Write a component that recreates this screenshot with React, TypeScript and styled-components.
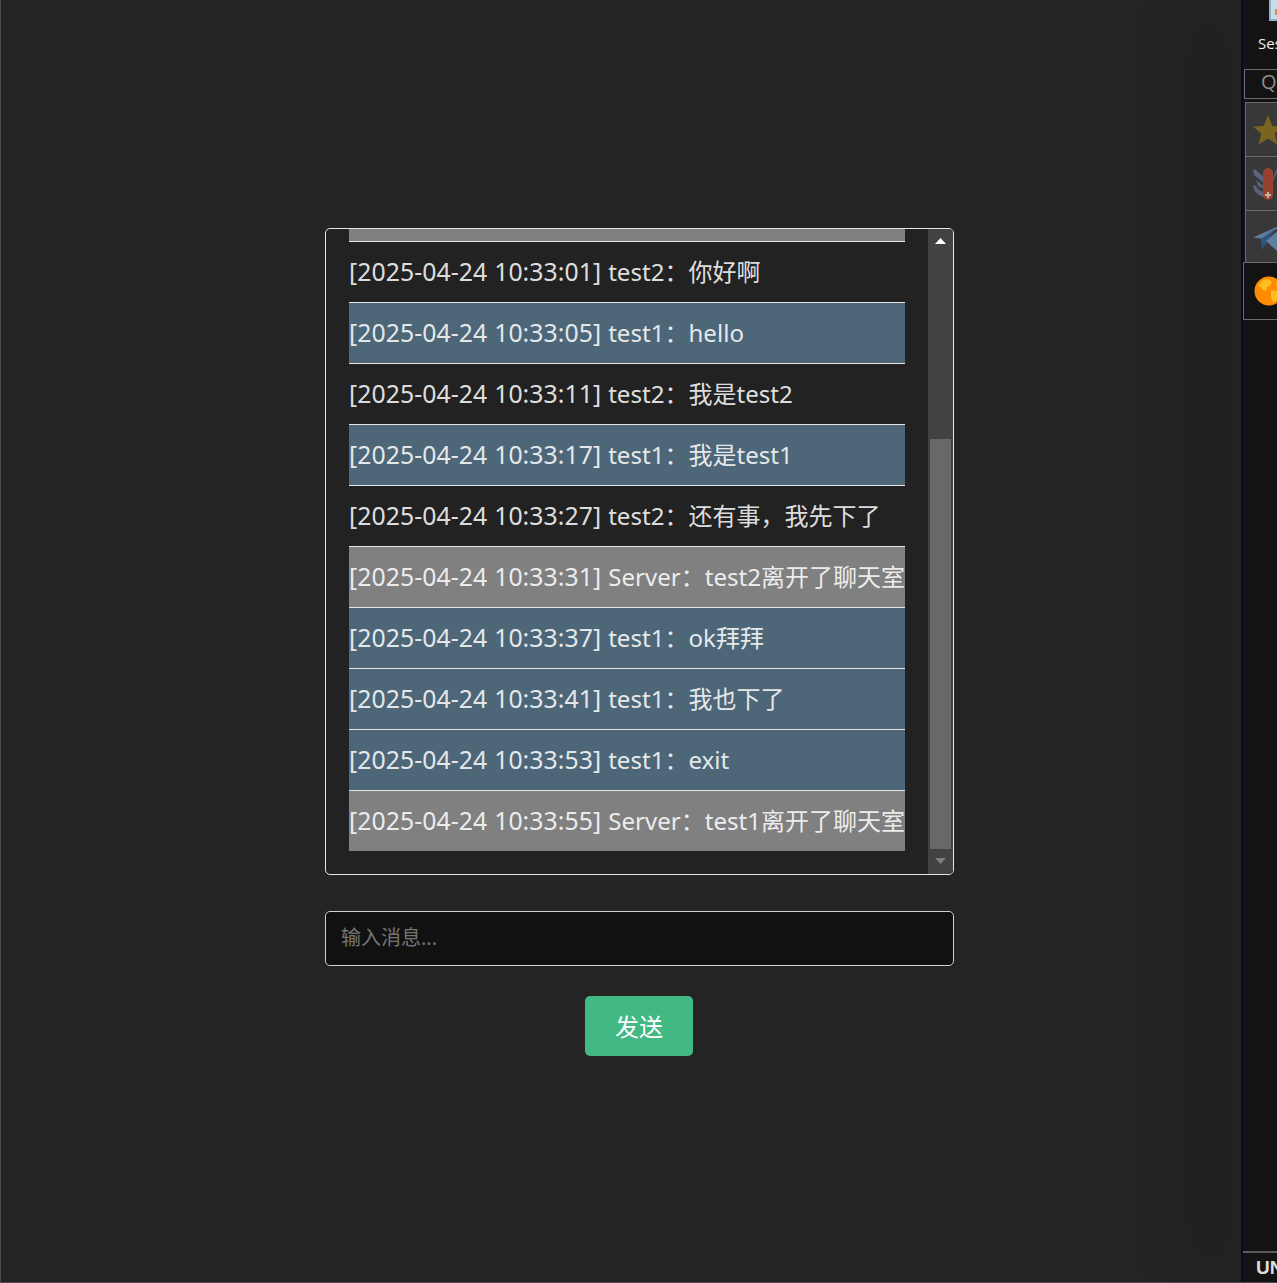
import React from "react";
import styled, { createGlobalStyle } from "styled-components";

const GlobalStyle = createGlobalStyle`
  html, body {
    margin: 0;
    padding: 0;
    height: 100%;
    background: #242424;
    overflow: hidden;
  }
  * {
    box-sizing: border-box;
  }
`;

const FONT = `"Noto Sans", "Noto Sans CJK SC", sans-serif`;

type Kind = "server" | "self" | "other";

const rowColor: Record<Kind, string> = {
  server: "#808080",
  self: "#4d6779",
  other: "transparent",
};

const Page = styled.div`
  position: relative;
  height: 1283px;
  display: flex;
  flex-direction: column;
  align-items: center;
  justify-content: center;
  padding: 2px 0 0 1px;
  background: #242424;
  border-left: 1px solid #4a4a4a;
  border-bottom: 1px solid #4a4a4a;
  font-family: ${FONT};
`;

const ChatBox = styled.div`
  width: 629px;
  height: 647px;
  flex: none;
  display: flex;
  border: 1px solid #e6e6e6;
  border-radius: 5px;
  overflow: hidden;
  background: #222;
`;

const MessageList = styled.div`
  flex: 1;
  min-width: 0;
  padding: 0 23px 23px;
`;

const Row = styled.div<{ $kind: Kind; $clipped?: boolean; $last?: boolean }>`
  height: ${({ $clipped, $last }) => ($clipped ? "13px" : $last ? "60px" : "61px")};
  line-height: 58px;
  font-size: 24px;
  white-space: nowrap;
  overflow: hidden;
  color: rgba(255, 255, 255, 0.87);
  background: ${({ $kind }) => rowColor[$kind]};
  border-bottom: ${({ $last }) => ($last ? "none" : "1px solid #e6e6e6")};
`;

const Stamp = styled.span`
  font-size: 24.8px;
  letter-spacing: 0.05px;
  word-spacing: 0.5px;
`;

const Latin = styled.span`
  font-size: 24.1px;
`;

const ScrollBar = styled.div`
  width: 25px;
  display: flex;
  flex-direction: column;
  align-items: center;
  background: #424242;
`;

const ArrowButton = styled.div<{ $enabled?: boolean }>`
  width: 100%;
  height: 25px;
  flex: none;
  display: flex;
  align-items: center;
  justify-content: center;
  padding-bottom: ${({ $enabled }) => ($enabled ? "1px" : "2px")};
  color: ${({ $enabled }) => ($enabled ? "#fff" : "#7f7f7f")};
`;

const TrackGap = styled.div`
  flex: none;
  height: 185px;
`;

const Thumb = styled.div`
  flex: 1;
  width: 21px;
  background: #686868;
`;

const MessageInput = styled.input`
  display: block;
  width: 629px;
  height: 55px;
  flex: none;
  margin-top: 36px;
  padding: 0 15px 2px;
  background: #111;
  border: 1px solid #d0d0d0;
  border-radius: 5px;
  color: #fff;
  font-family: ${FONT};
  font-size: 20px;
  outline: none;

  &::placeholder {
    color: #757575;
    opacity: 1;
  }
`;

const SendButton = styled.button`
  width: 108px;
  height: 60px;
  flex: none;
  margin: 30px 1px 0 0;
  padding: 0 0 2px;
  border: none;
  border-radius: 5px;
  background: #42b983;
  color: #fff;
  font-family: ${FONT};
  font-size: 24px;
`;

const Sidebar = styled.aside`
  position: absolute;
  top: 0;
  right: 0;
  bottom: 0;
  width: 36px;
  display: flex;
  flex-direction: column;
  overflow: hidden;
  background: #131313;
  border-left: 2px solid #050b20;
  box-shadow: -50px 0 60px rgba(0, 0, 0, 0.16);
  font-family: "Open Sans", sans-serif;
`;

const DocIcon = styled.div`
  height: 21px;
  margin-left: 26px;
  flex: none;
  position: relative;
  background: #c9dcea;
  border-left: 2px solid #8fb0c6;
  border-bottom: 2px solid #8fb0c6;

  &::after {
    content: "";
    position: absolute;
    top: 9px;
    left: 4px;
    width: 3px;
    height: 6px;
    background: #d98a55;
  }
`;

const ToolLabel = styled.div`
  height: 46px;
  padding: 11px 0 0 15px;
  flex: none;
  color: #eee;
  font-size: 15px;
  line-height: 22px;
  white-space: nowrap;
`;

const QuickBox = styled.div`
  height: 30px;
  width: 60px;
  margin: 2px 0 3px 1px;
  padding-left: 16px;
  flex: none;
  border: 1px solid #6c6c6c;
  color: #8e8e8e;
  font-size: 20px;
  line-height: 24px;
`;

const ToolCell = styled.div<{ $active?: boolean; $height: number }>`
  height: ${({ $height }) => $height}px;
  width: 70px;
  flex: none;
  margin-left: ${({ $active }) => ($active ? "0" : "2px")};
  margin-top: ${({ $active }) => ($active ? "-1px" : "0")};
  padding-left: ${({ $active }) => ($active ? "10px" : "7px")};
  display: flex;
  align-items: center;
  background: ${({ $active }) => ($active ? "#131313" : "#383838")};
  border: 1px solid #6a6a6a;
  border-bottom-width: ${({ $active }) => ($active ? "1px" : "0")};

  svg {
    flex: none;
  }
`;

const SidebarSpring = styled.div`
  flex: 1;
`;

const StatusBar = styled.div`
  height: 31px;
  flex: none;
  padding-left: 13px;
  border-top: 2px solid #5a5a5a;
  color: #dcdcdc;
  font-family: "Liberation Sans", sans-serif;
  font-size: 19px;
  font-weight: 700;
  line-height: 30px;
  white-space: nowrap;
`;

const messages: { time: string; who: string; text: string; kind: Kind }[] = [
  { time: "10:33:01", who: "test2", text: "你好啊", kind: "other" },
  { time: "10:33:05", who: "test1", text: "hello", kind: "self" },
  { time: "10:33:11", who: "test2", text: "我是test2", kind: "other" },
  { time: "10:33:17", who: "test1", text: "我是test1", kind: "self" },
  { time: "10:33:27", who: "test2", text: "还有事，我先下了", kind: "other" },
  { time: "10:33:31", who: "Server", text: "test2离开了聊天室", kind: "server" },
  { time: "10:33:37", who: "test1", text: "ok拜拜", kind: "self" },
  { time: "10:33:41", who: "test1", text: "我也下了", kind: "self" },
  { time: "10:33:53", who: "test1", text: "exit", kind: "self" },
  { time: "10:33:55", who: "Server", text: "test1离开了聊天室", kind: "server" },
];

const mixed = (text: string) =>
  text.split(/([\x20-\x7e]+)/).map((part, i) => (i % 2 ? <Latin key={i}>{part}</Latin> : part));

const Arrow = ({ down }: { down?: boolean }) => (
  <svg width="11" height="6" viewBox="0 0 11 6">
    <path d={down ? "M0 0H11L5.5 6Z" : "M0 6H11L5.5 0Z"} fill="currentColor" />
  </svg>
);

const StarIcon = () => (
  <svg width="30" height="32" viewBox="0 0 30 32">
    <path d="M15 1l4.300 11 10.700.6-8.300 7 2.800 11L15 24.600 5.500 30.600l2.800-11-8.300-7L10.700 12z" fill="#7a6520" />
  </svg>
);

const KnifeIcon = () => (
  <svg width="36" height="36" viewBox="0 0 36 36">
    <path d="M0 5l2-2 10 9v6L1 9zM20 12l4-10v5l-4 8z" fill="#5c6078" />
    <path d="M0 19l3 1c1 3 4 5 8 6v5C5 29 0 25 0 19z" fill="#5c6078" />
    <path d="M3 14l8 6v3l-6-3z" fill="#5c6078" />
    <rect x="10" y="2" width="10" height="32" rx="5" fill="#964030" />
    <path d="M14 26h2v2h2v2h-2v2h-2v-2h-2v-2h2z" fill="#c9b0a8" />
  </svg>
);

const PlaneIcon = () => (
  <svg width="36" height="30" viewBox="0 0 36 30">
    <path d="M0 15.500L30 2 10 17z" fill="#5b7b99" />
    <path d="M8 17L22 7 9 28z" fill="#2f5680" />
    <path d="M13 19L36 -1V40z" fill="#5f7f9c" />
  </svg>
);

const GlobeIcon = () => (
  <svg width="30" height="30" viewBox="0 0 30 30">
    <circle cx="15" cy="15" r="14.500" fill="#ff8c00" />
    <path d="M9 4l6-1 3 3-2 4-3 1-1 4-3-1-2-3-3-1zM17 14l6 1 2 4-3 6-3 1-2-5zM24 5l3 4-3 3-2-3z" fill="#ffc01f" />
  </svg>
);

export default function App(): React.ReactElement {
  return (
    <>
      <GlobalStyle />
      <Page>
        <ChatBox>
          <MessageList>
            <Row $kind="server" $clipped />
            {messages.map((m, i) => (
              <Row key={m.time} $kind={m.kind} $last={i === messages.length - 1}>
                <Stamp>[2025-04-24 {m.time}] </Stamp>
                <Latin>{m.who}</Latin>：{mixed(m.text)}
              </Row>
            ))}
          </MessageList>
          <ScrollBar>
            <ArrowButton $enabled>
              <Arrow />
            </ArrowButton>
            <TrackGap />
            <Thumb />
            <ArrowButton>
              <Arrow down />
            </ArrowButton>
          </ScrollBar>
        </ChatBox>
        <MessageInput placeholder="输入消息..." />
        <SendButton>发送</SendButton>
        <Sidebar>
          <DocIcon />
          <ToolLabel>Session</ToolLabel>
          <QuickBox>Quick</QuickBox>
          <ToolCell $height={54}>
            <StarIcon />
          </ToolCell>
          <ToolCell $height={54}>
            <KnifeIcon />
          </ToolCell>
          <ToolCell $height={53}>
            <PlaneIcon />
          </ToolCell>
          <ToolCell $active $height={58}>
            <GlobeIcon />
          </ToolCell>
          <SidebarSpring />
          <StatusBar>UNREGISTERED</StatusBar>
        </Sidebar>
      </Page>
    </>
  );
}
